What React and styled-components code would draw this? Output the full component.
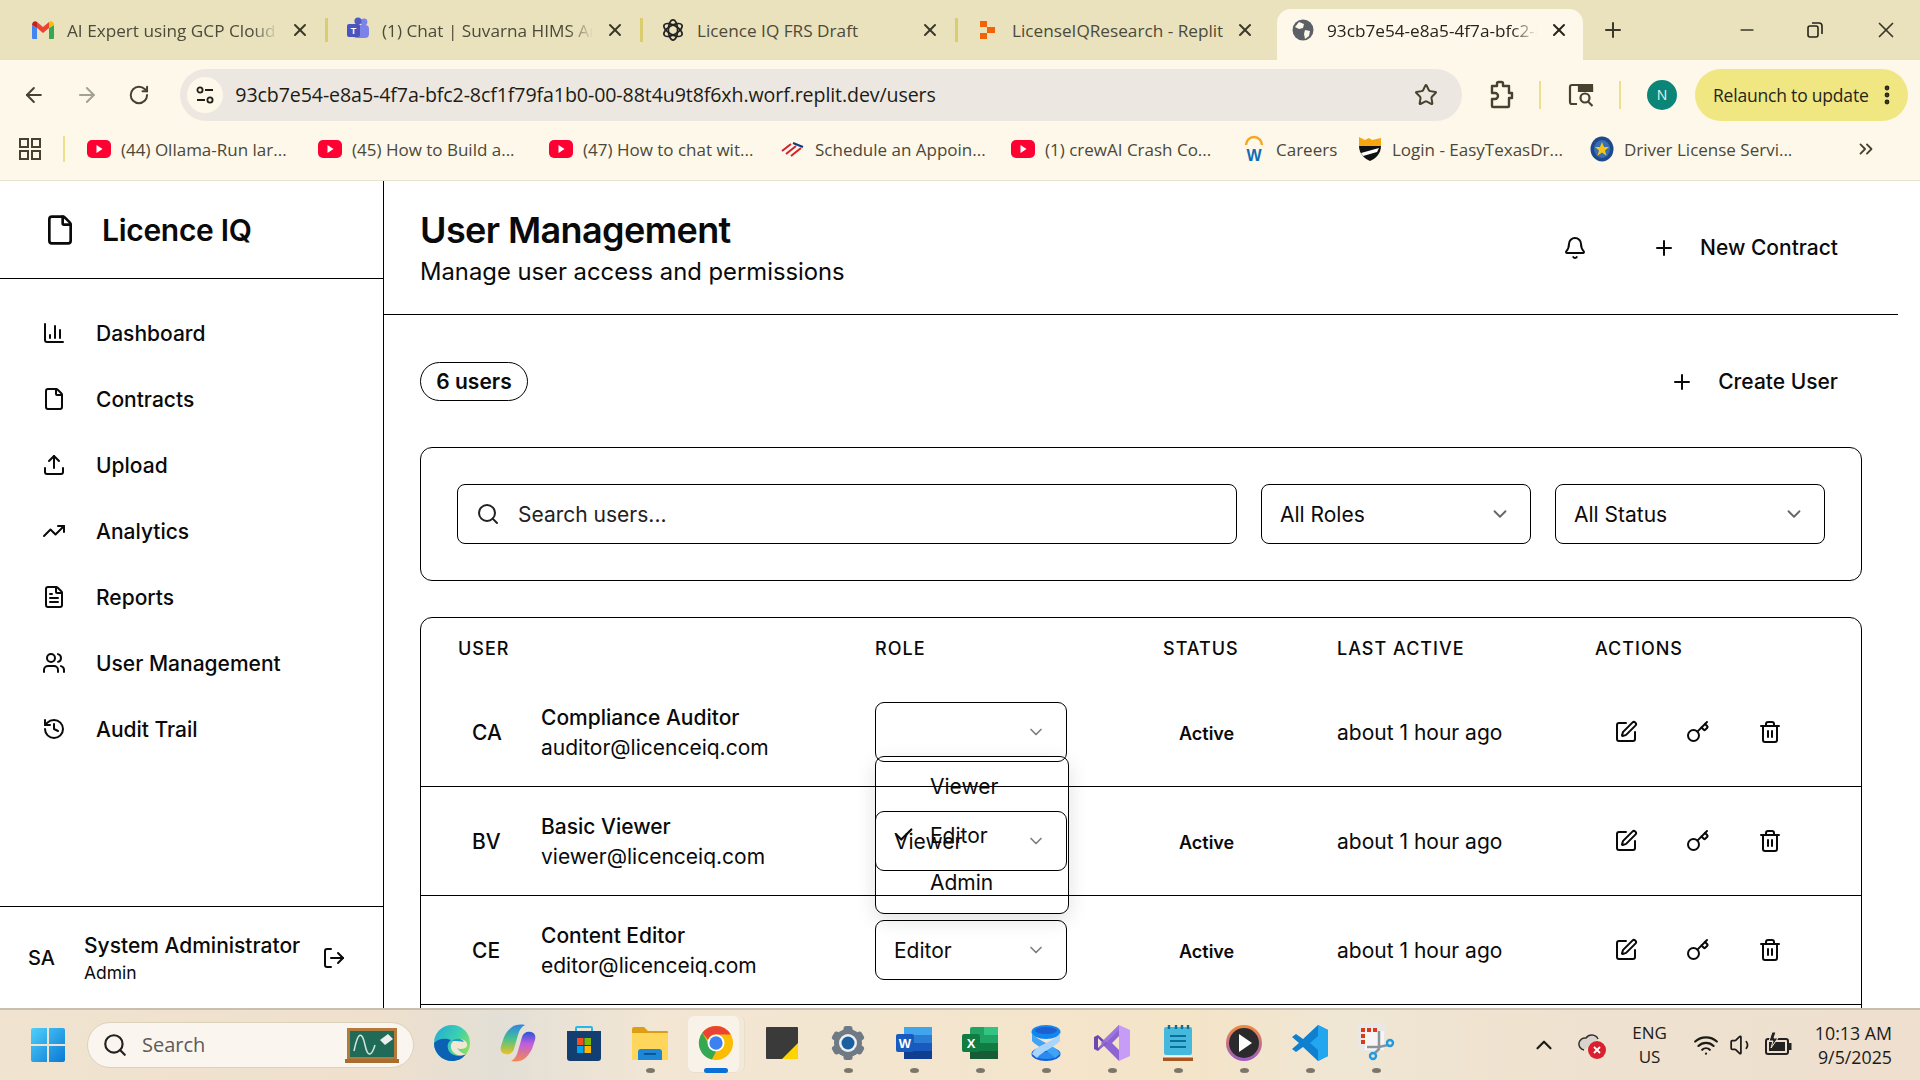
import React from "react";
import styled, { createGlobalStyle } from "styled-components";
import {
  ArrowLeft,
  ArrowRight,
  RotateCw,
  Star,
  ChevronsRight,
  X,
  Plus,
  Minus,
  EllipsisVertical,
  File,
  FileText,
  ChartColumn,
  Upload,
  TrendingUp,
  Users,
  History,
  LogOut,
  Bell,
  Search,
  ChevronDown,
  Check,
  SquarePen,
  Key,
  Trash2,
  ChevronUp,
  Wifi,
  Volume1,
} from "lucide-react";

const GlobalStyle = createGlobalStyle`
  html, body {
    margin: 0;
    padding: 0;
    width: 1920px;
    height: 1080px;
    overflow: hidden;
    background: #fff;
  }
  * { box-sizing: border-box; }
`;

const Screen = styled.div`
  width: 1920px;
  height: 1080px;
  display: flex;
  flex-direction: column;
  overflow: hidden;
  font-family: Inter, "Liberation Sans", sans-serif;
  color: #0a0a0a;
`;

/* browser chrome */
const TabStrip = styled.div`
  height: 60px;
  flex: none;
  background: #e9e2bd;
  display: flex;
  align-items: flex-end;
  padding-left: 13px;
  font-family: "Open Sans", "Liberation Sans", sans-serif;
`;

const Tab = styled.div`
  position: relative;
  width: ${(p) => (p.$active ? "306px" : "315px")};
  margin-left: ${(p) => (p.$active ? "4px" : "0")};
  height: 51px;
  display: flex;
  align-items: center;
  padding: 0 ${(p) => (p.$active ? "14px" : "18px")} 9px ${(p) => (p.$active ? "14px" : "18px")};
  gap: 12px;
  background: ${(p) => (p.$active ? "#fef8ea" : "transparent")};
  border-radius: 14px 14px 0 0;

  &::after {
    content: "";
    display: ${(p) => (p.$sep ? "block" : "none")};
    position: absolute;
    right: 0;
    top: 9px;
    width: 3px;
    height: 24px;
    background: #d9cd6f;
  }
`;

const Favicon = styled.div`
  width: 24px;
  flex: none;
  display: flex;
  justify-content: center;
`;

const TabLabel = styled.span`
  flex: 1;
  font-size: 17.2px;
  white-space: nowrap;
  overflow: hidden;
  color: ${(p) => (p.$active ? "#26251d" : "#4c4a3a")};
  -webkit-mask-image: ${(p) =>
    p.$fade ? "linear-gradient(to right, #000 88%, transparent)" : "none"};
  mask-image: ${(p) =>
    p.$fade ? "linear-gradient(to right, #000 88%, transparent)" : "none"};
`;

const WindowControls = styled.div`
  flex: 1;
  height: 51px;
  display: flex;
  align-items: center;
  padding-bottom: 9px;
  color: #3a3828;
`;

const NewTab = styled.div`
  margin-left: 18px;
  display: flex;
`;

const WinButtons = styled.div`
  margin-left: auto;
  display: flex;
  align-items: center;
  gap: 49px;
  padding-right: 21px;
`;

const Toolbar = styled.div`
  height: 69px;
  flex: none;
  background: #fef8ea;
  display: flex;
  align-items: center;
  padding: 0 12px 0 22px;
  color: #45432f;
  gap: 29px;
`;

const Omnibox = styled.div`
  margin-left: 2px;
  width: 1294px;
  height: 52px;
  background: #ece8e1;
  border-radius: 26px;
  display: flex;
  align-items: center;
  padding: 0 24px 0 7px;
  gap: 12px;
  color: #1f1e17;
`;

const SiteBadge = styled.div`
  width: 36px;
  height: 36px;
  border-radius: 50%;
  background: #fef8ea;
  display: flex;
  align-items: center;
  justify-content: center;
`;

const Url = styled.span`
  flex: 1;
  font-family: "Open Sans", "Liberation Sans", sans-serif;
  font-size: 19.6px;
  letter-spacing: -0.1px;
  color: #1c1b14;
  white-space: nowrap;
`;

const ToolbarRight = styled.div`
  margin-left: -4px;
  display: flex;
  align-items: center;
  flex: 1;
  height: 52px;
  color: #45432f;
`;

const VSep = styled.div`
  width: 2px;
  height: ${(p) => p.$h || 28}px;
  background: #eee08a;
  margin: ${(p) => p.$m || "0 26px"};
`;

const Avatar = styled.div`
  width: 30px;
  height: 30px;
  border-radius: 50%;
  background: #0b8577;
  color: #e6f5f0;
  font-size: 14px;
  display: flex;
  align-items: center;
  justify-content: center;
  font-family: "Open Sans", sans-serif;
`;

const Relaunch = styled.div`
  margin-left: 18px;
  width: 213px;
  height: 52px;
  border-radius: 26px;
  background: #f0e682;
  display: flex;
  align-items: center;
  justify-content: space-between;
  padding: 0 9px 0 18px;
  font-family: "Open Sans", sans-serif;
  font-size: 17.5px;
  letter-spacing: -0.2px;
  color: #26251a;
`;

const BookmarkBar = styled.div`
  height: 52px;
  flex: none;
  background: #fef8ea;
  border-bottom: 1px solid #e9e2cf;
  display: flex;
  align-items: center;
  padding: 0 0 11px 19px;
  font-family: "Open Sans", "Liberation Sans", sans-serif;
  color: #45432f;
`;

const Bookmark = styled.div`
  flex: 0 0 ${(p) => p.$w}px;
  display: flex;
  align-items: center;
  gap: 10px;
  font-size: 17px;
  color: #4a4838;
  white-space: nowrap;
`;

const MoreBookmarks = styled.div`
  margin-left: 50px;
  display: flex;
  color: #45432f;
`;

/* app layout */
const AppBody = styled.div`
  flex: 1;
  min-height: 0;
  display: flex;
  background: #fff;
  overflow: hidden;
`;

const Sidebar = styled.aside`
  width: 384px;
  flex: none;
  border-right: 1px solid #000;
  display: flex;
  flex-direction: column;
`;

const Brand = styled.div`
  height: 98px;
  flex: none;
  border-bottom: 1px solid #000;
  display: flex;
  align-items: center;
  gap: 26px;
  padding-left: 44px;
`;

const BrandName = styled.div`
  font-size: 30px;
  font-weight: 600;
  letter-spacing: -0.3px;
`;

const Nav = styled.nav`
  flex: 1;
  display: flex;
  flex-direction: column;
  padding: 21px 0 0 42px;
`;

const NavRow = styled.div`
  height: 66px;
  display: flex;
  align-items: center;
  gap: 30px;
  font-size: 21px;
  font-weight: 500;
`;

const UserFoot = styled.div`
  height: 102px;
  flex: none;
  border-top: 1px solid #000;
  display: flex;
  align-items: center;
  padding-left: 28px;
`;

const FootInitials = styled.div`
  width: 56px;
  font-size: 20px;
  font-weight: 500;
`;

const FootText = styled.div`
  width: 238px;
  display: flex;
  flex-direction: column;
  gap: 4px;
`;

const FootName = styled.div`
  font-size: 21px;
  font-weight: 500;
  white-space: nowrap;
`;

const FootRole = styled.div`
  font-size: 17.5px;
`;

const Main = styled.main`
  width: 1514px;
  flex: none;
  display: flex;
  flex-direction: column;
  min-height: 0;
  overflow: hidden;
`;

const PageHeader = styled.header`
  height: 134px;
  flex: none;
  border-bottom: 1px solid #000;
  display: flex;
  align-items: center;
  justify-content: space-between;
  padding: 0 60px 0 36px;
`;

const TitleBlock = styled.div`
  margin-top: 1px;
`;

const Title = styled.h1`
  margin: 0;
  font-size: 36px;
  font-weight: 600;
  letter-spacing: -0.6px;
  line-height: 44px;
`;

const Subtitle = styled.p`
  margin: 4px 0 0;
  font-size: 23.8px;
  line-height: 32px;
`;

const HeaderActions = styled.div`
  display: flex;
  align-items: center;
`;

const TextButton = styled.div`
  display: flex;
  align-items: center;
  gap: 24px;
  font-size: 21px;
  font-weight: 500;
  white-space: nowrap;
`;

const BellWrap = styled.div`
  display: flex;
  margin-right: 65px;
`;

const Content = styled.div`
  flex: 1;
  padding: 47px 36px 0 36px;
  display: flex;
  flex-direction: column;
  min-height: 0;
`;

const ListBar = styled.div`
  height: 39px;
  flex: none;
  display: flex;
  align-items: center;
  justify-content: space-between;
  padding-right: 24px;
  margin-bottom: 46px;
`;

const CountBadge = styled.div`
  height: 39px;
  width: 108px;
  justify-content: center;
  border: 1px solid #000;
  border-radius: 20px;
  display: flex;
  align-items: center;
  font-size: 21px;
  font-weight: 600;
`;

const FilterCard = styled.section`
  height: 134px;
  flex: none;
  border: 1px solid #000;
  border-radius: 12px;
  display: flex;
  align-items: center;
  gap: 24px;
  padding: 0 36px;
  margin-bottom: 36px;
`;

const SearchField = styled.div`
  flex: 1;
  height: 60px;
  border: 1px solid #000;
  border-radius: 8px;
  display: flex;
  align-items: center;
  gap: 18px;
  padding-left: 18px;
  font-size: 21px;
  color: #222;
`;

const FilterSelect = styled.div`
  width: 270px;
  height: 60px;
  border: 1px solid #000;
  border-radius: 8px;
  display: flex;
  align-items: center;
  justify-content: space-between;
  padding: 0 19px 0 18px;
  font-size: 21px;
`;

const TableCard = styled.section`
  height: 520px;
  flex: none;
  border: 1px solid #000;
  border-radius: 12px;
`;

const TableGrid = styled.div`
  display: grid;
  grid-template-columns: 454px 288px 174px 258px 1fr;
  align-items: center;
`;

const HeadRow = styled(TableGrid)`
  height: 60px;
  padding-top: 1px;
`;

const HeadCell = styled.div`
  font-size: 18px;
  font-weight: 500;
  letter-spacing: 1px;
  padding-left: ${(p) => p.$pad || 0}px;
`;

const Row = styled(TableGrid)`
  height: 109px;
  border-bottom: 1px solid #000;
`;

const UserCell = styled.div`
  display: flex;
  align-items: center;
  padding-left: 51px;
`;

const Initials = styled.div`
  width: 69px;
  font-size: 21px;
  font-weight: 500;
`;

const UserText = styled.div`
  display: flex;
  flex-direction: column;
  gap: 3px;
`;

const UserName = styled.div`
  font-size: 21px;
  font-weight: 500;
  line-height: 27px;
`;

const UserMail = styled.div`
  font-size: 21px;
  line-height: 27px;
`;

const RoleSelect = styled.div`
  position: relative;
  width: 192px;
  height: 60px;
  border: 1px solid #000;
  border-radius: 9px;
  display: flex;
  align-items: center;
  justify-content: space-between;
  padding: 0 20px 0 18px;
  font-size: 21px;
`;

const RoleMenu = styled.div`
  position: absolute;
  left: -1px;
  top: 53px;
  width: 194px;
  height: 158px;
  border: 1px solid #000;
  border-radius: 9px;
  box-shadow: 0 6px 20px rgba(0, 0, 0, 0.12);
  z-index: 1;
`;

const MenuItem = styled.div`
  position: absolute;
  left: 54px;
  top: ${(p) => p.$top}px;
  font-size: 21px;
  line-height: 26px;
`;

const MenuCheck = styled.div`
  position: absolute;
  left: 17px;
  top: 67px;
  display: flex;
`;

const StatusText = styled.div`
  padding: 2px 0 0 16px;
  font-size: 18px;
  font-weight: 600;
`;

const ActiveText = styled.div`
  font-size: 21px;
`;

const ActionIcons = styled.div`
  display: flex;
  align-items: center;
  gap: 48px;
  padding-left: 19px;
`;

/* windows taskbar */
const Taskbar = styled.footer`
  height: 72px;
  flex: none;
  border-top: 2px solid #c9bfb0;
  background: linear-gradient(90deg, #f0e3d0 0%, #eee0cd 20%, #e3dfd6 26%, #f2e6d4 34%, #f4e4c8 62%, #efe6d4 70%, #efe2cf 80%, #eedfcf 100%);
  display: flex;
  align-items: center;
  font-family: "Open Sans", "Liberation Sans", sans-serif;
  color: #1c1b18;
`;

const StartSlot = styled.div`
  width: 87px;
  flex: none;
  display: flex;
  justify-content: center;
  padding-left: 9px;
`;

const SearchPill = styled.div`
  width: 327px;
  height: 46px;
  flex: none;
  border-radius: 23px;
  background: #faf5ee;
  border: 1px solid #ddd0bd;
  display: flex;
  align-items: center;
  padding: 0 14px 0 14px;
  gap: 14px;
  font-size: 20px;
  color: #5d5b56;
`;

const SearchGrow = styled.span`
  flex: 1;
  margin-top: -2px;
`;

const Dock = styled.div`
  margin-left: 5px;
  display: flex;
  height: 100%;
`;

const DockSlot = styled.div`
  position: relative;
  width: 66px;
  display: flex;
  align-items: center;
  justify-content: center;
  padding-bottom: 4px;
`;

const ActiveBox = styled.div`
  position: absolute;
  left: 5px;
  top: 6px;
  width: 51px;
  height: 56px;
  background: #f9f2e8;
  border-radius: 6px;
  box-shadow: 5px 0 0 #f4e9d9, 6px 0 0 #e9dfce, 0 1px 0 #e9dfce;
`;

const ActiveMark = styled.div`
  position: absolute;
  left: 21px;
  top: 58px;
  width: 24px;
  height: 5px;
  border-radius: 3px;
  background: #0a6fd6;
`;

const RunDot = styled.div`
  position: absolute;
  left: 29px;
  bottom: 7px;
  width: 9px;
  height: 5px;
  border-radius: 50%;
  background: #7c756a;
`;

const DockIcon = styled.div`
  position: relative;
  display: flex;
`;

const Tray = styled.div`
  margin-left: auto;
  display: flex;
  align-items: center;
  padding-right: 28px;
`;

const TrayStack = styled.div`
  display: flex;
  flex-direction: column;
  align-items: ${(p) => p.$align || "center"};
  gap: 2px;
  font-size: ${(p) => p.$size || 17}px;
  line-height: 22px;
  white-space: nowrap;
`;

const TrayIcon = styled.div`
  display: flex;
  margin-left: ${(p) => p.$ml || 0}px;
  margin-right: ${(p) => p.$mr || 0}px;
`;

/* drawn logos */
const Gmail = () => (
  <svg width="24" height="20" viewBox="0 0 24 20">
    <path d="M1 5v13a1 1 0 0 0 1 1h4V8z" fill="#4285f4" />
    <path d="M23 5v13a1 1 0 0 1-1 1h-4V8z" fill="#34a853" />
    <path d="M6 8l6 5 6-5V2l-6 5-6-5z" fill="#ea4335" />
    <path d="M1 5c0-3 3-5 5-3v6z" fill="#c5221f" />
    <path d="M23 5c0-3-3-5-5-3v6z" fill="#fbbc04" />
  </svg>
);

const Teams = () => (
  <svg width="24" height="26" viewBox="0 0 24 26">
    <circle cx="18" cy="5" r="3.4" fill="#7b83eb" />
    <circle cx="12" cy="4" r="3.6" fill="#5059c9" />
    <rect x="7" y="8" width="16" height="13" rx="4" fill="#7b83eb" />
    <rect x="1" y="7" width="13" height="13" rx="2" fill="#4b53bc" />
    <text x="7.5" y="17" fontSize="9" fontWeight="700" fill="#fff" textAnchor="middle" fontFamily="Liberation Sans">T</text>
  </svg>
);

const OpenAi = () => (
  <svg width="24" height="24" viewBox="0 0 24 24" fill="none" stroke="#222" strokeWidth="1.7">
    <ellipse cx="12" cy="12" rx="4.6" ry="10.2" />
    <ellipse cx="12" cy="12" rx="4.6" ry="10.2" transform="rotate(60 12 12)" />
    <ellipse cx="12" cy="12" rx="4.6" ry="10.2" transform="rotate(120 12 12)" />
  </svg>
);

const ReplitMark = () => (
  <svg width="18" height="20" viewBox="0 0 18 20" fill="#f26207">
    <path d="M1 1h7v6H1zM8 7h8v6H8zM1 13h7v6H1z" />
  </svg>
);

const GlobeFav = () => (
  <svg width="22" height="22" viewBox="0 0 22 22">
    <circle cx="11" cy="11" r="10.5" fill="#5b5f66" />
    <path d="M7 3l5 2-1 4-4 1-4-2zM13 11l5 1-1 5-4 3-1-5z" fill="#fef8ea" />
  </svg>
);

const YouTube = () => (
  <svg width="24" height="18" viewBox="0 0 24 18">
    <rect width="24" height="18" rx="5" fill="#ff0033" />
    <path d="M9.5 5l6 4-6 4z" fill="#fff" />
  </svg>
);

const BoaFlag = () => (
  <svg width="24" height="16" viewBox="0 0 24 16" fill="none" strokeWidth="2">
    <path d="M1 10L10 3M5 13l10-8M10 15l10-8" stroke="#d4202c" />
    <path d="M12 2l10 4" stroke="#0a3b80" />
  </svg>
);

const Workday = () => (
  <svg width="24" height="28" viewBox="0 0 24 28">
    <path d="M4 10a8 8 0 0 1 16 0" fill="none" stroke="#f5a623" strokeWidth="2.4" />
    <text x="12" y="26" fontSize="16" fontWeight="700" fill="#0f6cb6" textAnchor="middle" fontFamily="Liberation Sans">W</text>
  </svg>
);

const Shield = () => (
  <svg width="24" height="26" viewBox="0 0 24 26">
    <path d="M1 1l6 3 4-2 3 2 9-2v8H1z" fill="#f5a70f" />
    <path d="M1 10h22c0 8-6 13-11 15C7 23 1 18 1 10z" fill="#111" />
    <path d="M3 17l18-5-2 4-14 4z" fill="#fff" />
  </svg>
);

const TexasSeal = () => (
  <svg width="24" height="26" viewBox="0 0 24 26">
    <ellipse cx="12" cy="13" rx="11.5" ry="12.5" fill="#1d4a8c" />
    <ellipse cx="12" cy="13" rx="8" ry="9" fill="#3d6fb0" />
    <path d="M12 6l2 5h5l-4 3.4 1.5 5.4L12 16.6l-4.5 3.2L9 14.4 5 11h5z" fill="#f5c518" />
  </svg>
);

const SiteTune = () => (
  <svg width="20" height="20" viewBox="0 0 20 20" fill="none" stroke="#1f1e17" strokeWidth="1.8">
    <circle cx="5" cy="5" r="2.6" />
    <path d="M10 5h8M2 15h8" />
    <circle cx="15" cy="15" r="2.6" />
  </svg>
);

const ExtensionIcon = () => (
  <svg width="28" height="30" viewBox="0 0 28 30" fill="none" stroke="#45432f" strokeWidth="2.4" strokeLinejoin="round">
    <path d="M5 6h5V3.500a1.500 1.500 0 0 1 1.500-1.500h3A1.500 1.500 0 0 1 16 3.500V6h6v7h3v5h-3v8a1 1 0 0 1-1 1H6a1 1 0 0 1-1-1v-7h3a3 3 0 0 0 0-6H5z" />
  </svg>
);

const LensPanel = () => (
  <svg width="28" height="26" viewBox="0 0 28 26" fill="none" stroke="#45432f" strokeWidth="2.2">
    <path d="M10 22H5a2 2 0 0 1-2-2V5a2 2 0 0 1 2-2h18a2 2 0 0 1 2 2v5" />
    <path d="M12 3h13v6H12z" fill="#45432f" />
    <circle cx="18" cy="16" r="4.5" />
    <path d="M21.5 20l4 4" />
  </svg>
);

const RestoreIcon = () => (
  <svg width="18" height="18" viewBox="0 0 18 18" fill="none" stroke="#26251a" strokeWidth="1.6">
    <rect x="2" y="5" width="10" height="11" rx="2" />
    <path d="M6 2h7a3 3 0 0 1 3 3v8" />
  </svg>
);

const AppsGrid = () => (
  <svg width="22" height="22" viewBox="0 0 22 22" fill="none" stroke="#45432f" strokeWidth="2">
    <rect x="1" y="1" width="8" height="8" />
    <rect x="13" y="1" width="8" height="8" />
    <rect x="1" y="13" width="8" height="8" />
    <rect x="13" y="13" width="8" height="8" />
  </svg>
);

const WinLogo = () => (
  <svg width="36" height="36" viewBox="0 0 36 36">
    <defs>
      <linearGradient id="winG" x1="0" y1="0" x2="1" y2="1">
        <stop offset="0" stopColor="#4fd0fb" />
        <stop offset="1" stopColor="#0a78d4" />
      </linearGradient>
    </defs>
    <path d="M1 3a2 2 0 0 1 2-2h14v16H1zM19 1h14a2 2 0 0 1 2 2v14H19zM1 19h16v16H3a2 2 0 0 1-2-2zM19 19h16v14a2 2 0 0 1-2 2H19z" fill="url(#winG)" />
  </svg>
);

const EduBoard = () => (
  <svg width="54" height="38" viewBox="0 0 54 38">
    <rect x="2" y="2" width="50" height="32" fill="#b5793c" />
    <rect x="5" y="5" width="44" height="26" fill="#1f6b57" />
    <path d="M9 25c4-20 8-20 11-6s7 10 10 0" fill="none" stroke="#cfe7dc" strokeWidth="1.5" />
    <path d="M35 14l8-6 5 5-8 6z" fill="#eee" />
    <rect y="33" width="54" height="4" fill="#a86c2f" />
  </svg>
);

const Edge = () => (
  <svg width="38" height="38" viewBox="0 0 38 38">
    <defs>
      <linearGradient id="edgeG" x1="0" y1="0" x2="1" y2="0.6">
        <stop offset="0" stopColor="#20a9d8" />
        <stop offset="0.6" stopColor="#3ccfb0" />
        <stop offset="1" stopColor="#86e060" />
      </linearGradient>
    </defs>
    <circle cx="19" cy="19" r="18" fill="url(#edgeG)" />
    <path d="M1 19c0 10 8 18 18 18 6 0 10-2 14-7-8 4-16 1-18-5-1-4 0-7 3-9-8-3-14 0-17 3z" fill="#0b62b5" />
    <path d="M18 24c-1-5 3-9 8-9 5 0 9 3 8 7-1 3-7 4-10 2 3 4 6 6 9 6-5 3-13 1-15-6z" fill="#f2e6d4" />
    <path d="M19 17c3-3 10-3 12 1-3-1-8-1-12-1z" fill="#1c9ec4" />
  </svg>
);

const Copilot = () => (
  <svg width="36" height="38" viewBox="0 0 36 38">
    <defs>
      <linearGradient id="copL" x1="0" y1="0" x2="0" y2="1">
        <stop offset="0" stopColor="#2c86e8" />
        <stop offset="0.5" stopColor="#4cc38a" />
        <stop offset="1" stopColor="#f0c020" />
      </linearGradient>
      <linearGradient id="copR" x1="0" y1="0" x2="0" y2="1">
        <stop offset="0" stopColor="#2456d8" />
        <stop offset="0.4" stopColor="#c05ce0" />
        <stop offset="1" stopColor="#f38a50" />
      </linearGradient>
    </defs>
    <path d="M12 3c2-2 8-3 13-2-4 2-6 6-7 10l-4 14c-1 4-5 6-9 5-4-1-5-4-4-8l3-9c2-4 5-8 8-10z" fill="url(#copL)" />
    <path d="M24 35c-2 2-8 3-13 2 4-2 6-6 7-10l4-14c1-4 5-6 9-5 4 1 5 4 4 8l-3 9c-2 4-5 8-8 10z" fill="url(#copR)" />
  </svg>
);

const Store = () => (
  <svg width="36" height="36" viewBox="0 0 36 36">
    <path d="M10 7V3a1 1 0 0 1 1-1h14a1 1 0 0 1 1 1v4" fill="none" stroke="#29b6e8" strokeWidth="2" />
    <path d="M1 6h34v27a3 3 0 0 1-3 3H4a3 3 0 0 1-3-3z" fill="#123e72" />
    <rect x="11" y="13" width="6.5" height="7" fill="#f25022" />
    <rect x="18.500" y="13" width="6.5" height="7" fill="#7fba00" />
    <rect x="11" y="21" width="6.5" height="7" fill="#00a4ef" />
    <rect x="18.500" y="21" width="6.5" height="7" fill="#ffb900" />
  </svg>
);

const Folder = () => (
  <svg width="38" height="34" viewBox="0 0 38 34">
    <path d="M1 3a2 2 0 0 1 2-2h10l4 4h19a1 1 0 0 1 1 1v5H1z" fill="#dc9f14" />
    <path d="M1 7h36v27H1z" fill="#ffd65c" />
    <path d="M7 34v-8a3 3 0 0 1 3-3h18a3 3 0 0 1 3 3v8z" fill="#1b87d6" />
    <rect x="13" y="27" width="12" height="1.800" fill="#0d4f8b" />
  </svg>
);

const ChromeLogo = () => (
  <svg width="36" height="36" viewBox="0 0 38 38">
    <circle cx="19" cy="19" r="18" fill="#fbbc04" />
    <path d="M19 1a18 18 0 0 1 15.6 9H19a9 9 0 0 0-8.4 5.6L4.5 8.2A18 18 0 0 1 19 1z" fill="#ea4335" />
    <path d="M4.5 8.2l8.2 14.3a8 8 0 0 0 7 4.5L14.600 36.500A18 18 0 0 1 4.500 8.200z" fill="#34a853" />
    <circle cx="19" cy="19" r="9" fill="#fff" />
    <circle cx="19" cy="19" r="7" fill="#3b82f0" />
  </svg>
);

const Sticky = () => (
  <svg width="32" height="32" viewBox="0 0 34 34">
    <rect width="34" height="34" rx="1" fill="#3a3a3a" />
    <path d="M34 17v17H17z" fill="#ffd400" />
  </svg>
);

const Gear = () => (
  <svg width="36" height="36" viewBox="0 0 36 36">
    <g fill="#6f7a85">
      <circle cx="18" cy="18" r="14" />
      <rect x="13.500" y="1" width="9" height="34" rx="2.500" />
      <rect x="13.500" y="1" width="9" height="34" rx="2.500" transform="rotate(60 18 18)" />
      <rect x="13.500" y="1" width="9" height="34" rx="2.500" transform="rotate(120 18 18)" />
    </g>
    <circle cx="18" cy="18" r="9" fill="#eef0f2" />
    <circle cx="18" cy="18" r="6.500" fill="#1b5fa0" />
  </svg>
);

const Word = () => (
  <svg width="36" height="32" viewBox="0 0 36 32">
    <rect x="8" y="0" width="28" height="32" rx="2" fill="#2b7cd3" />
    <rect x="8" y="0" width="28" height="8" fill="#41a5ee" />
    <rect x="8" y="16" width="28" height="8" fill="#185abd" />
    <rect x="8" y="24" width="28" height="8" fill="#103f91" />
    <rect x="0" y="7" width="18" height="18" rx="2" fill="#185abd" />
    <text x="9" y="21" fontSize="13" fontWeight="700" fill="#fff" textAnchor="middle" fontFamily="Liberation Sans">W</text>
  </svg>
);

const Excel = () => (
  <svg width="36" height="32" viewBox="0 0 36 32">
    <rect x="8" y="0" width="28" height="32" rx="2" fill="#21a366" />
    <rect x="22" y="0" width="14" height="8" fill="#33c481" />
    <rect x="8" y="16" width="28" height="8" fill="#107c41" />
    <rect x="8" y="24" width="28" height="8" fill="#185c37" />
    <rect x="0" y="7" width="18" height="18" rx="2" fill="#107c41" />
    <text x="9" y="21" fontSize="13" fontWeight="700" fill="#fff" textAnchor="middle" fontFamily="Liberation Sans">X</text>
  </svg>
);

const ZedSwirl = () => (
  <svg width="30" height="36" viewBox="0 0 30 36">
    <ellipse cx="15" cy="7" rx="14.500" ry="7" fill="#1186ee" />
    <ellipse cx="15" cy="29" rx="14.500" ry="7" fill="#0f5fd8" />
    <ellipse cx="15" cy="5.500" rx="11" ry="3.500" fill="#1d5fd0" />
    <ellipse cx="15" cy="30.500" rx="11" ry="3.500" fill="#2a8af0" />
    <path d="M1 8c3 5 9 7 14 10 6 3 12 6 14 11l-5 4C20 27 6 22 1 16z" fill="#3fa4f6" />
    <path d="M29 8c-3 5-9 7-14 10-6 3-12 6-14 11l5 4c4-6 18-11 23-17z" fill="#a9d4fc" />
  </svg>
);

const VisualStudio = () => (
  <svg width="36" height="36" viewBox="0 0 36 36">
    <path d="M25 0l11 5v26l-11 5z" fill="#c79cf7" />
    <path d="M25 0L7 18l18 18v-11l-7-7 7-7z" fill="#8e63d2" />
    <path d="M0 12l4-2 9 8-9 8-4-2zM4 13v10l5-5z" fill="#6d47b0" fillRule="evenodd" />
    <path d="M4 26l21-21v-5L9 15z" fill="#a880e6" opacity="0.6" />
  </svg>
);

const Notepad = () => (
  <svg width="30" height="36" viewBox="0 0 30 36">
    <rect x="1" y="2" width="28" height="28" rx="2" fill="#45b8dd" />
    <rect x="1" y="31" width="28" height="1.500" fill="#f5f0e8" />
    <rect x="0" y="32.500" width="30" height="3.500" fill="#a9561e" />
    <path d="M6 0v4M13 0v4M19 0v4M25 0v4" stroke="#0b6f96" strokeWidth="2.400" />
    <path d="M7 11h16M7 16h16M7 22h16" stroke="#0b6f96" strokeWidth="2" />
  </svg>
);

const Player = () => (
  <svg width="36" height="36" viewBox="0 0 36 36">
    <defs>
      <linearGradient id="plG" x1="0" y1="0" x2="0" y2="1">
        <stop offset="0" stopColor="#f08a3c" />
        <stop offset="1" stopColor="#9a5bc4" />
      </linearGradient>
    </defs>
    <circle cx="18" cy="18" r="18" fill="url(#plG)" />
    <circle cx="18" cy="18" r="15" fill="#2b2b2d" />
    <path d="M13 9l13 9-13 9z" fill="#fff" />
  </svg>
);

const VSCode = () => (
  <svg width="36" height="36" viewBox="0 0 36 36">
    <path d="M26 0l10 5v26l-10 5-15-14-7 5-4-3 7-6-7-6 4-3 7 5z" fill="#0f7fd0" />
    <path d="M26 0l10 5v26l-10 5V25l-8-7 8-7z" fill="#23a6f0" />
  </svg>
);

const Snip = () => (
  <svg width="38" height="38" viewBox="0 0 38 38">
    <rect x="1" y="0" width="27" height="27" rx="4" fill="#e9e8e6" />
    <rect x="8" y="7" width="19" height="19" fill="#f6f5f3" />
    <path d="M4 4h4v4H4zM10 4h4v4h-4zM16 4h4v4h-4zM4 10h4v4H4zM4 16h4v4H4z" fill="#d83b1a" />
    <path d="M22 7v18l-4 4M10 23h12l9-2" stroke="#8a939c" strokeWidth="2.500" fill="none" />
    <circle cx="33" cy="19" r="3" fill="none" stroke="#1e9be0" strokeWidth="2.400" />
    <circle cx="16" cy="32" r="3" fill="none" stroke="#1e9be0" strokeWidth="2.400" />
  </svg>
);

const CloudOff = () => (
  <svg width="30" height="30" viewBox="0 0 30 30">
    <path d="M6 20a6 6 0 0 1 2-12 7 7 0 0 1 12 1" fill="#d8d3cc" stroke="#333" strokeWidth="1.500" />
    <circle cx="19" cy="20" r="9" fill="#d8202f" />
    <path d="M16 17l6 6M22 17l-6 6" stroke="#fff" strokeWidth="1.800" />
  </svg>
);

const Battery = () => (
  <svg width="30" height="30" viewBox="0 0 30 30">
    <rect x="3" y="9" width="22" height="15" rx="2" fill="none" stroke="#222" strokeWidth="2" />
    <rect x="26" y="13" width="2.500" height="7" fill="#222" />
    <path d="M6 12h16v9H6z" fill="#222" />
    <path d="M9 2l-3 9h4l-2 7 7-10h-4l2-6z" fill="#222" stroke="#f2e6d4" strokeWidth="1" />
  </svg>
);

const tabs = [
  { icon: <Gmail />, label: "AI Expert using GCP Cloud", fade: true, sep: true },
  { icon: <Teams />, label: "(1) Chat | Suvarna HIMS Anywhere", fade: true, sep: true },
  { icon: <OpenAi />, label: "Licence IQ FRS Draft", sep: true },
  { icon: <ReplitMark />, label: "LicenseIQResearch - Replit" },
];

const bookmarks = [
  { icon: <YouTube />, label: "(44) Ollama-Run lar...", w: 231 },
  { icon: <YouTube />, label: "(45) How to Build a...", w: 231 },
  { icon: <YouTube />, label: "(47) How to chat wit...", w: 232 },
  { icon: <BoaFlag />, label: "Schedule an Appoin...", w: 230 },
  { icon: <YouTube />, label: "(1) crewAI Crash Co...", w: 231 },
  { icon: <Workday />, label: "Careers", w: 116 },
  { icon: <Shield />, label: "Login - EasyTexasDr...", w: 232 },
  { icon: <TexasSeal />, label: "Driver License Servi...", w: 215 },
];

const navItems = [
  { icon: ChartColumn, label: "Dashboard" },
  { icon: File, label: "Contracts" },
  { icon: Upload, label: "Upload" },
  { icon: TrendingUp, label: "Analytics" },
  { icon: FileText, label: "Reports" },
  { icon: Users, label: "User Management" },
  { icon: History, label: "Audit Trail" },
];

const users = [
  { initials: "CA", name: "Compliance Auditor", email: "auditor@licenceiq.com", role: "", open: true },
  { initials: "BV", name: "Basic Viewer", email: "viewer@licenceiq.com", role: "Viewer" },
  { initials: "CE", name: "Content Editor", email: "editor@licenceiq.com", role: "Editor" },
];

const dockApps = [
  { icon: <Edge /> },
  { icon: <Copilot /> },
  { icon: <Store /> },
  { icon: <Folder />, running: true },
  { icon: <ChromeLogo />, active: true },
  { icon: <Sticky /> },
  { icon: <Gear />, running: true },
  { icon: <Word />, running: true },
  { icon: <Excel />, running: true },
  { icon: <ZedSwirl />, running: true },
  { icon: <VisualStudio />, running: true },
  { icon: <Notepad />, running: true },
  { icon: <Player />, running: true },
  { icon: <VSCode />, running: true },
  { icon: <Snip />, running: true },
];

const BrowserChrome = () => (
  <>
    <TabStrip>
      {tabs.map((t) => (
        <Tab key={t.label} $sep={t.sep}>
          <Favicon>{t.icon}</Favicon>
          <TabLabel $fade={t.fade}>{t.label}</TabLabel>
          <X size={20} color="#3a3828" strokeWidth={2.4} />
        </Tab>
      ))}
      <Tab $active>
        <Favicon>
          <GlobeFav />
        </Favicon>
        <TabLabel $active $fade>93cb7e54-e8a5-4f7a-bfc2-8cf1f79fa1b0</TabLabel>
        <X size={20} color="#26251a" strokeWidth={2.4} />
      </Tab>
      <WindowControls>
        <NewTab>
          <Plus size={24} strokeWidth={2} />
        </NewTab>
        <WinButtons>
          <Minus size={20} strokeWidth={2} />
          <RestoreIcon />
          <X size={26} strokeWidth={1.6} />
        </WinButtons>
      </WindowControls>
    </TabStrip>
    <Toolbar>
      <ArrowLeft size={24} strokeWidth={2} />
      <ArrowRight size={24} strokeWidth={2} color="#a3a193" />
      <RotateCw size={22} strokeWidth={2.2} />
      <Omnibox>
        <SiteBadge>
          <SiteTune />
        </SiteBadge>
        <Url>93cb7e54-e8a5-4f7a-bfc2-8cf1f79fa1b0-00-88t4u9t8f6xh.worf.replit.dev/users</Url>
        <Star size={24} strokeWidth={2} color="#45432f" />
      </Omnibox>
      <ToolbarRight>
        <ExtensionIcon />
        <VSep $m="0 26px 0 24px" />
        <LensPanel />
        <VSep $m="0 26px 0 24px" />
        <Avatar>N</Avatar>
        <Relaunch>
          Relaunch to update
          <EllipsisVertical size={24} strokeWidth={2.8} />
        </Relaunch>
      </ToolbarRight>
    </Toolbar>
    <BookmarkBar>
      <AppsGrid />
      <VSep $m="0 22px 0 22px" $h={26} />
      {bookmarks.map((b) => (
        <Bookmark key={b.label} $w={b.w}>
          {b.icon}
          {b.label}
        </Bookmark>
      ))}
      <MoreBookmarks>
        <ChevronsRight size={22} />
      </MoreBookmarks>
    </BookmarkBar>
  </>
);

const SideMenu = () => (
  <Sidebar>
    <Brand>
      <File size={32} strokeWidth={2} />
      <BrandName>Licence IQ</BrandName>
    </Brand>
    <Nav>
      {navItems.map(({ icon: Icon, label }) => (
        <NavRow key={label}>
          <Icon size={24} strokeWidth={2} />
          {label}
        </NavRow>
      ))}
    </Nav>
    <UserFoot>
      <FootInitials>SA</FootInitials>
      <FootText>
        <FootName>System Administrator</FootName>
        <FootRole>Admin</FootRole>
      </FootText>
      <LogOut size={24} strokeWidth={2} />
    </UserFoot>
  </Sidebar>
);

const UserRow = ({ user }) => (
  <Row>
    <UserCell>
      <Initials>{user.initials}</Initials>
      <UserText>
        <UserName>{user.name}</UserName>
        <UserMail>{user.email}</UserMail>
      </UserText>
    </UserCell>
    <div>
      <RoleSelect>
        <span>{user.role}</span>
        <ChevronDown size={20} strokeWidth={2} color="#7d7d7d" />
        {user.open && (
          <RoleMenu>
            <MenuItem $top={17}>Viewer</MenuItem>
            <MenuCheck>
              <Check size={22} strokeWidth={2.4} />
            </MenuCheck>
            <MenuItem $top={66}>Editor</MenuItem>
            <MenuItem $top={113}>Admin</MenuItem>
          </RoleMenu>
        )}
      </RoleSelect>
    </div>
    <StatusText>Active</StatusText>
    <ActiveText>about 1 hour ago</ActiveText>
    <ActionIcons>
      <SquarePen size={24} strokeWidth={2} />
      <Key size={24} strokeWidth={2} />
      <Trash2 size={24} strokeWidth={2} />
    </ActionIcons>
  </Row>
);

const UserManagement = () => (
  <Main>
    <PageHeader>
      <TitleBlock>
        <Title>User Management</Title>
        <Subtitle>Manage user access and permissions</Subtitle>
      </TitleBlock>
      <HeaderActions>
        <BellWrap>
          <Bell size={24} strokeWidth={2} />
        </BellWrap>
        <TextButton>
          <Plus size={24} strokeWidth={2} />
          New Contract
        </TextButton>
      </HeaderActions>
    </PageHeader>
    <Content>
      <ListBar>
        <CountBadge>6 users</CountBadge>
        <TextButton>
          <Plus size={24} strokeWidth={2} />
          Create User
        </TextButton>
      </ListBar>
      <FilterCard>
        <SearchField>
          <Search size={24} strokeWidth={2} />
          Search users...
        </SearchField>
        <FilterSelect>
          All Roles
          <ChevronDown size={22} strokeWidth={2} color="#666" />
        </FilterSelect>
        <FilterSelect>
          All Status
          <ChevronDown size={22} strokeWidth={2} color="#666" />
        </FilterSelect>
      </FilterCard>
      <TableCard>
        <HeadRow>
          <HeadCell $pad={37}>USER</HeadCell>
          <HeadCell>ROLE</HeadCell>
          <HeadCell>STATUS</HeadCell>
          <HeadCell>LAST ACTIVE</HeadCell>
          <HeadCell>ACTIONS</HeadCell>
        </HeadRow>
        {users.map((u) => (
          <UserRow key={u.initials} user={u} />
        ))}
      </TableCard>
    </Content>
  </Main>
);

const WindowsTaskbar = () => (
  <Taskbar>
    <StartSlot>
      <WinLogo />
    </StartSlot>
    <SearchPill>
      <Search size={26} strokeWidth={2} color="#222" />
      <SearchGrow>Search</SearchGrow>
      <EduBoard />
    </SearchPill>
    <Dock>
      {dockApps.map((app, i) => (
        <DockSlot key={i}>
          {app.active && <ActiveBox />}
          <DockIcon>{app.icon}</DockIcon>
          {app.active && <ActiveMark />}
          {app.running && <RunDot />}
        </DockSlot>
      ))}
    </Dock>
    <Tray>
      <TrayIcon $mr={21}>
        <ChevronUp size={26} strokeWidth={2} />
      </TrayIcon>
      <TrayIcon $mr={24}>
        <CloudOff />
      </TrayIcon>
      <TrayStack>
        <span>ENG</span>
        <span>US</span>
      </TrayStack>
      <TrayIcon $ml={26}>
        <Wifi size={26} strokeWidth={2} />
      </TrayIcon>
      <TrayIcon $ml={10}>
        <Volume1 size={26} strokeWidth={1.6} />
      </TrayIcon>
      <TrayIcon $ml={8} $mr={22}>
        <Battery />
      </TrayIcon>
      <TrayStack $align="flex-end" $size={17.8}>
        <span>10:13 AM</span>
        <span>9/5/2025</span>
      </TrayStack>
    </Tray>
  </Taskbar>
);

export default function App() {
  return (
    <Screen>
      <GlobalStyle />
      <BrowserChrome />
      <AppBody>
        <SideMenu />
        <UserManagement />
      </AppBody>
      <WindowsTaskbar />
    </Screen>
  );
}
